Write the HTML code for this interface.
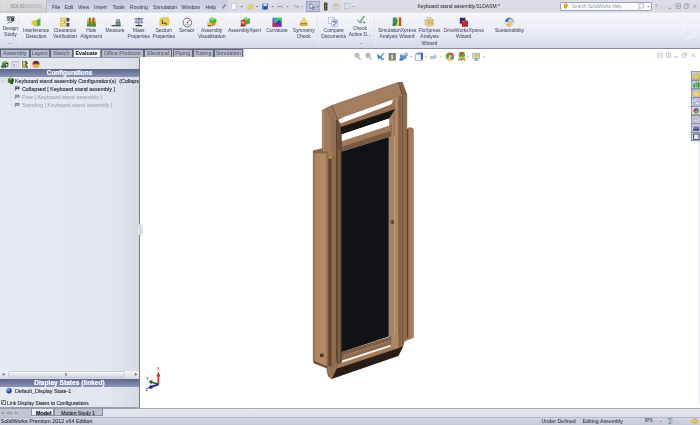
<!DOCTYPE html>
<html><head><meta charset="utf-8">
<style>
*{margin:0;padding:0;box-sizing:border-box}
html,body{width:700px;height:425px;overflow:hidden;background:#fff}
body{font-family:"Liberation Sans",sans-serif;position:relative;color:#222}
.abs{position:absolute}
#menubar{left:0;top:0;width:700px;height:12.6px;background:linear-gradient(#dedfe6,#d9dae2 85%,#e6e7ee)}
#menus{left:47px;top:0;width:181px;height:12.6px;background:linear-gradient(#c8ccdf,#d3d6e6 85%,#e0e2ee)}
#logo{left:0;top:0;width:47px;height:12.6px;background:linear-gradient(#dddee1,#cbccd1);border-right:1px solid #b9bbc6}
#ribbon{left:0;top:12.6px;width:700px;height:35.6px;background:linear-gradient(#f6f7fb 0%,#eff0f7 35%,#e4e6f0 70%,#d5d8e7 100%)}
#ribbonline{left:0;top:48.2px;width:700px;height:1px;background:#868ca3}
#tabrow{left:0;top:49px;width:243.5px;height:8px;background:#c3c7d4}
.t{position:absolute;white-space:nowrap;filter:blur(.3px);-webkit-text-stroke:.18px currentColor}
.m{font-size:5.2px;top:3.9px;color:#363a58;-webkit-text-stroke:.02px currentColor}
.rl{font-size:4.92px;line-height:6.3px;text-align:center;color:#4a4d6c;transform:translateX(-50%);-webkit-text-stroke:.04px currentColor}
.tab{position:absolute;top:49px;height:7.6px;border:0.6px solid #5e647c;border-left-width:.3px;border-right-width:.4px;border-bottom:none;background:#b9bdca;font-size:5.4px;line-height:6.4px;text-align:center;color:#50566c;overflow:hidden;white-space:nowrap}
.tab span{filter:blur(.3px);display:inline-block;-webkit-text-stroke:.03px currentColor}
#panel{left:0;top:57px;width:139px;height:352px;background:linear-gradient(90deg,#e7e9f1 0%,#e4e6ef 78%,#d7dae6 100%)}
#panelborder{left:138.9px;top:57px;width:.9px;height:352px;background:#747990}
.hdr{position:absolute;left:0;width:139px;height:8.5px;background:linear-gradient(#5c678f,#6f7aa0 45%,#8d97b9);color:#fff;font-weight:bold;font-size:6.4px;line-height:8.5px;text-align:center}
.tree{font-size:5.37px;color:#1a1a24;-webkit-text-stroke:.08px currentColor}
.gray{color:#a4a7b4}
#bottabs{left:0;top:408.4px;width:700px;height:8.4px;background:linear-gradient(#e6e8ef,#dcdfe8);border-top:.8px solid #a3a8ba}
#botnav{left:0;top:409px;width:31px;height:7.6px;background:#c3c7d3}
#status{left:0;top:416.6px;width:700px;height:8.4px;background:linear-gradient(#d3d6e1,#c6c9d6);border-top:.6px solid #b4b8c8}
</style></head><body>
<div class="abs" id="menubar"></div>
<div class="abs" id="menus"></div>
<div class="abs" id="logo"></div>
<div class="abs" id="ribbon"></div>
<div class="abs" id="ribbonline"></div>
<div class="abs" id="tabrow"></div>
<div class="abs" id="panel"></div>
<div class="abs" id="panelborder"></div>
<div class="abs" style="left:0;top:56.8px;width:140px;height:1.3px;background:#8f95ac"></div>
<div class="abs" id="bottabs"></div>
<div class="abs" id="botnav"></div>
<div class="abs" id="status"></div>

<!-- UI -->
<div class="t m" style="left:52px">File</div>
<div class="t m" style="left:64.5px">Edit</div>
<div class="t m" style="left:78px">View</div>
<div class="t m" style="left:94px">Insert</div>
<div class="t m" style="left:112.5px">Tools</div>
<div class="t m" style="left:130px">Routing</div>
<div class="t m" style="left:153px">Simulation</div>
<div class="t m" style="left:181.5px">Window</div>
<div class="t m" style="left:205.5px">Help</div>
<div class="t" style="left:10.5px;top:3.6px;font-size:4.5px;font-weight:bold;color:#a6a8af;letter-spacing:.05px;-webkit-text-stroke:0;top:4.2px"><span style="color:#9c9ea6">SOLID</span><span style="font-weight:normal">WORKS</span></div>
<div class="t" style="left:417.5px;top:2.9px;font-size:5px;color:#33343f;-webkit-text-stroke:.05px currentColor">Keyboard stand assembly.SLDASM *</div>
<div class="abs" style="left:560px;top:1.6px;width:91.5px;height:9.6px;background:#fbfbfe;border:.7px solid #9aa3bf;border-radius:1px"></div>
<div class="t" style="left:572px;top:3.9px;font-size:4.62px;color:#9496a4;-webkit-text-stroke:0">Search SolidWorks Help</div>
<div class="t rl" style="left:10.4px;top:25.5px">Design<br>Study</div>
<div class="t rl" style="left:36.2px;top:28.1px">Interference<br>Detection</div>
<div class="t rl" style="left:65px;top:28.1px">Clearance<br>Verification</div>
<div class="t rl" style="left:91.2px;top:28.1px">Hole<br>Alignment</div>
<div class="t rl" style="left:115px;top:28.1px">Measure</div>
<div class="t rl" style="left:138.7px;top:28.1px">Mass<br>Properties</div>
<div class="t rl" style="left:163.7px;top:28.1px">Section<br>Properties</div>
<div class="t rl" style="left:186.7px;top:28.1px">Sensor</div>
<div class="t rl" style="left:211.7px;top:28.1px">Assembly<br>Visualization</div>
<div class="t rl" style="left:244.5px;top:28.1px">AssemblyXpert</div>
<div class="t rl" style="left:277px;top:28.1px">Curvature</div>
<div class="t rl" style="left:303.7px;top:28.1px">Symmetry<br>Check</div>
<div class="t rl" style="left:333.7px;top:28.1px">Compare<br>Documents</div>
<div class="t rl" style="left:360px;top:25.5px">Check<br>Active D...</div>
<div class="t rl" style="left:397px;top:28.1px">SimulationXpress<br>Analysis Wizard</div>
<div class="t rl" style="left:429.5px;top:28.1px">FloXpress<br>Analysis<br>Wizard</div>
<div class="t rl" style="left:463.7px;top:28.1px">DriveWorksXpress<br>Wizard</div>
<div class="t rl" style="left:509.5px;top:28.1px">Sustainability</div>
<div class="tab" style="left:0px;width:29.5px"><span>Assembly</span></div>
<div class="tab" style="left:29.5px;width:20.5px"><span>Layout</span></div>
<div class="tab" style="left:50px;width:22.5px"><span>Sketch</span></div>
<div class="tab" style="left:72.5px;width:28.0px;background:#f4f5fa;color:#111;font-weight:bold;top:48.6px;height:8.6px;border-color:#8a90a4"><span>Evaluate</span></div>
<div class="tab" style="left:100.5px;width:43.19999999999999px"><span>Office Products</span></div>
<div class="tab" style="left:143.7px;width:28.80000000000001px"><span>Electrical</span></div>
<div class="tab" style="left:172.5px;width:20.5px"><span>Piping</span></div>
<div class="tab" style="left:193px;width:20.69999999999999px"><span>Tubing</span></div>
<div class="tab" style="left:213.7px;width:29.30000000000001px"><span>Simulation</span></div>
<div class="hdr" style="top:68.6px;height:8px;line-height:8px"><span class="t" style="position:static;display:inline-block">Configurations</span></div>
<div class="t tree" style="left:15px;top:77.6px;width:124px;overflow:hidden">Keyboard stand assembly Configuration(s)&nbsp; (Collapsed)</div>
<div class="t tree" style="left:22px;top:85.8px">Collapsed [ Keyboard stand assembly ]</div>
<div class="t tree gray" style="left:22px;top:94px">Free [ Keyboard stand assembly ]</div>
<div class="t tree gray" style="left:22px;top:102.2px">Standing [ Keyboard stand assembly ]</div>
<div class="abs" style="left:0;top:370.5px;width:139px;height:8px;background:linear-gradient(#f2f3f8,#d6d9e4)"></div>
<div class="abs" style="left:8px;top:371.3px;width:117px;height:6.4px;background:linear-gradient(#fbfbfd,#e0e2ea 60%,#d2d5e0);border:.4px solid #c9ccd8;border-radius:1px"></div><div class="abs" style="left:64.5px;top:373px;width:.5px;height:3px;background:#9a9eae"></div><div class="abs" style="left:66px;top:373px;width:.5px;height:3px;background:#9a9eae"></div>
<div class="t" style="left:2px;top:371.5px;font-size:3.2px;top:372.3px;color:#666">&#9664;</div><div class="t" style="left:134.5px;top:372.3px;font-size:3.2px;color:#666">&#9654;</div>
<div class="hdr" style="top:378.6px;font-size:6.62px"><span class="t" style="position:static;display:inline-block">Display States (linked)</span></div>
<div class="t tree" style="left:15px;top:388px">Default_Display State-1</div>
<div class="t tree" style="left:7px;top:399.5px;font-size:5px">Link Display States to Configurations</div>
<div class="abs" style="left:1px;top:400px;width:4.6px;height:4.6px;background:#fff;border:.5px solid #7d8296"></div><div class="t" style="left:1.4px;top:399px;font-size:5px;color:#333">&#10003;</div>
<div class="abs" style="left:0;top:407.4px;width:140px;height:1.3px;background:#979db2"></div>
<div class="abs" style="left:31px;top:409.3px;width:23px;height:7.2px;background:#eceef4;border:.5px solid #8a90a4;border-top:none"></div>
<div class="t" style="left:36px;top:410.3px;font-size:5.4px;font-weight:bold;color:#111">Model</div>
<div class="abs" style="left:54px;top:409.3px;width:49px;height:7.2px;background:#bfc3cf;border:.5px solid #8a90a4;border-top:none"></div>
<div class="t" style="left:61.3px;top:410.4px;font-size:5.05px;color:#333">Motion Study 1</div>
<div class="t" style="left:1px;top:410.6px;font-size:3.6px;color:#9a9eae;letter-spacing:1.6px">&#9664;&#9664;&#9654;&#9654;</div>
<div class="t" style="left:.6px;top:418.4px;font-size:5.4px;color:#24263a;-webkit-text-stroke:.05px currentColor">SolidWorks Premium 2012 x64 Edition</div>
<div class="t" style="left:541.5px;top:418.4px;font-size:5.3px;color:#2c2e44;-webkit-text-stroke:.03px currentColor">Under Defined</div>
<div class="t" style="left:582.5px;top:418.4px;font-size:5.3px;color:#2c2e44;-webkit-text-stroke:.03px currentColor">Editing Assembly</div>
<div class="t" style="left:645px;top:418.4px;font-size:4.8px;color:#2c2e44;-webkit-text-stroke:.03px currentColor">IPS</div>
<div class="t" style="left:660px;top:418px;font-size:5px;color:#444">-</div>
<svg class="abs" id="icons" style="left:0;top:0;filter:blur(.3px)" width="700" height="425" viewBox="0 0 700 425">
<rect x="1.6" y="3" width="6.8" height="7.4" rx="1.6" fill="#d9d4d0" stroke="#efe2d4" stroke-width=".7"/><path d="M3 5 l2.4 -.6 l-1.2 1.8 q1.6 0 1 1.4 q-.6 1 -2 1.2" fill="none" stroke="#f4efe8" stroke-width=".6"/>

<path d="M222 8 l3 -4 l1 1 l-3 4z" fill="#7d8190"/>
<path d="M231.4 3.4 h3.2 l1.4 1.4 v4.6 h-4.6z" fill="#fdfdfe" stroke="#9ba0b3" stroke-width=".45"/>
<polygon points="240.5,5.95 242.7,5.95 241.6,7.25" fill="#555"/>
<path d="M247.4 9 l1 -3.6 h5 l-1.2 3.6z" fill="#ead768" stroke="#b4a248" stroke-width=".35"/><path d="M249.4 5.2 l1.4 -2 l1.6 2z" fill="#dcc956"/>
<polygon points="255.9,5.95 258.1,5.95 257,7.25" fill="#555"/>
<rect x="262.2" y="3.4" width="5.8" height="6" rx=".5" fill="#3a72c0"/><rect x="263.4" y="3.6" width="3.4" height="2.2" fill="#e4ecf8"/><rect x="263.8" y="7" width="2.6" height="2.4" fill="#244a88"/>
<polygon points="271.29999999999995,5.95 273.5,5.95 272.4,7.25" fill="#555"/>
<rect x="277.2" y="5.4" width="5.8" height="3" rx=".6" fill="#b0b4c0"/><rect x="278.4" y="3.8" width="3.4" height="1.8" fill="#f4f4f7" stroke="#a0a4b4" stroke-width=".3"/><rect x="278.4" y="7.4" width="3.4" height="1.8" fill="#e6e7ec"/>
<polygon points="286.5,5.95 288.70000000000005,5.95 287.6,7.25" fill="#777"/>
<path d="M293.5 7.2 q1.5 -3.6 4.6 -1.2 l.6 -.9 l.4 3 l-3 -.3 l.9 -.8 q-1.7 -1.4 -2.6 .6z" fill="#a9b0c8"/>
<polygon points="300.7,5.95 302.90000000000003,5.95 301.8,7.25" fill="#999"/>
<rect x="306.4" y="1.2" width="12.8" height="10.4" fill="#bcc3dc" stroke="#7382b4" stroke-width=".6"/>
<path d="M310 3.2 v5.6 l1.4 -1.3 l.9 1.9 l.9 -.5 l-.9 -1.8 h1.9z" fill="#eef0f8" stroke="#3e4664" stroke-width=".5"/><rect x="312.8" y="7.6" width="2.2" height="2" fill="none" stroke="#5a6288" stroke-width=".35"/>
<polygon points="316.5,6.05 318.29999999999995,6.05 317.4,7.15" fill="#444"/>
<rect x="324" y="2.4" width="3.4" height="8" rx="1" fill="#3a3530"/><circle cx="325.7" cy="4" r=".9" fill="#c8452e"/><circle cx="325.7" cy="6.3" r=".9" fill="#d2a83a"/><circle cx="325.7" cy="8.6" r=".9" fill="#5c9a48"/>
<rect x="333.8" y="4.6" width="5.4" height="3.8" fill="#dcd9c6" stroke="#a9a693" stroke-width=".35"/><rect x="334.4" y="3.6" width="3.4" height="1.2" fill="#c9bb7c"/><line x1="334.6" y1="6.4" x2="338.4" y2="6.4" stroke="#a9a693" stroke-width=".4"/>
<rect x="344.2" y="3.8" width="5.8" height="5" fill="#cbd4e6" stroke="#98a6c4" stroke-width=".35"/><line x1="344.6" y1="5.2" x2="349.6" y2="5.2" stroke="#fff" stroke-width=".6"/><line x1="344.6" y1="7" x2="349.6" y2="7" stroke="#fff" stroke-width=".6"/>
<polygon points="352.70000000000005,6.05 354.5,6.05 353.6,7.15" fill="#777"/>
<path d="M563.5 4 l3 -1 l1.6 2.2 l-2 3.8 l-2 -1z" fill="#d9a92e"/><path d="M564 4.4 l2 -.4 l.6 1.6z" fill="#f3dc84"/>
<circle cx="641.2" cy="5.6" r="2.6" fill="none" stroke="#8d93a6" stroke-width=".6"/><line x1="639.6" y1="7.8" x2="637.6" y2="10.4" stroke="#8d93a6" stroke-width=".8"/>
<polygon points="647.4,6.1499999999999995 649.1999999999999,6.1499999999999995 648.3,7.25" fill="#333"/>
<text x="654.8" y="8.2" font-size="5.2" fill="#8d92a6" font-family="Liberation Sans">?</text>
<polygon points="660.8,6 662.4,6 661.6,7" fill="#777"/>
<rect x="668.4" y="7.8" width="3" height=".9" fill="#8a8fa2"/>
<rect x="676.2" y="3.8" width="4.4" height="4.6" fill="none" stroke="#8a8fa2" stroke-width=".6"/><rect x="677.4" y="5" width="2" height="2.2" fill="#a4a9ba"/>
<rect x="684.4" y="4.8" width="3.4" height="3.4" fill="none" stroke="#8a8fa2" stroke-width=".6"/><path d="M685.6 4.6 v-1 h3.4 v3.4 h-1" fill="none" stroke="#8a8fa2" stroke-width=".6"/>
<path d="M693.2 4.4 l3.2 3.6 M696.4 4.4 l-3.2 3.6" stroke="#9499ac" stroke-width=".7"/>
<g transform="translate(6.6,16.4)"><rect x="0" y="0" width="8" height="1.4" fill="#5a5d68"/><rect x=".4" y="1.6" width="3.2" height="3" fill="#8a8e9a"/><rect x="4.2" y="1.6" width="3.4" height="3" fill="#44474f"/><path d="M1 7.2 l2 -2 l1.6 1 l2.6 -2" stroke="#3c3f48" stroke-width=".8" fill="none"/></g>
<polygon points="8.9,42.949999999999996 10.700000000000001,42.949999999999996 9.8,44.050000000000004" fill="#666"/>
<line x1="19.3" y1="15" x2="19.3" y2="46" stroke="#f6f7fb" stroke-width=".7"/><line x1="18.7" y1="15" x2="18.7" y2="46" stroke="#d0d3e0" stroke-width=".5"/>
<g transform="translate(31.6,17.6)"><path d="M0 3.6 l3.6 -1.6 v6 l-3.6 -.8z" fill="#e8cf3c"/><path d="M3.2 3.4 l5.6 -3 v7.4 l-5.6 1.2z" fill="#4fae3e"/><path d="M3.2 3.4 l2.2 -1.2 v6 l-2.2 .5z" fill="#c7d04a"/><path d="M5.6 1.6 l3.2 -1.2 v2z" fill="#8fd97c"/></g>
<g transform="translate(60.2,17.6)"><rect x="0" y=".4" width="9" height="3.4" fill="#e6d24a" stroke="#a89a30" stroke-width=".3"/><rect x="0" y="5.4" width="9" height="3.4" fill="#e6d24a" stroke="#a89a30" stroke-width=".3"/><rect x="6.4" y=".4" width="2.6" height="3.4" fill="#3a4a86"/><rect x="6.4" y="5.4" width="2.6" height="3.4" fill="#3a4a86"/><rect x="1.4" y="1.2" width="3.6" height="1" fill="#f6eea0"/><rect x="1.4" y="6.2" width="3.6" height="1" fill="#f6eea0"/><line x1="4.4" y1="3.8" x2="4.4" y2="5.4" stroke="#444" stroke-width=".6"/></g>
<g transform="translate(87,17.6)"><rect x="0" y="1.2" width="9" height="7.6" rx=".6" fill="#7eb83a"/><rect x="0" y="1.2" width="9" height="3" fill="#d9c93e"/><rect x="2" y="0" width="1.6" height="8" fill="#8a5a2a"/><rect x="5.6" y="0" width="1.6" height="8" fill="#c0392b"/><rect x="0" y="6.6" width="9" height="2.2" fill="#4b8d2c"/></g>
<g transform="translate(111.6,19.4)"><path d="M0 5.6 h4 v-3.4 h5 v4.6 h-9z" fill="#6f8f86"/><rect x="4.6" y="0" width="3.8" height="3.4" fill="#4c7a74"/><rect x="5.4" y=".8" width="2.2" height="1.4" fill="#bcd6cf"/><rect x="0" y="5.8" width="9" height="1" fill="#3e4c4a"/></g>
<g transform="translate(134.6,18)"><rect x="0" y=".2" width="8.6" height="1.2" fill="#5b6590"/><rect x="3.8" y="0" width="1" height="7" fill="#4a4f68"/><path d="M0 4.6 h3.4 l-1.7 -3z" fill="#8fa2cc" stroke="#5b6590" stroke-width=".3"/><path d="M5.2 4.6 h3.4 l-1.7 -3z" fill="#8fa2cc" stroke="#5b6590" stroke-width=".3"/><path d="M0 4.6 q1.7 1.8 3.4 0z M5.2 4.6 q1.7 1.8 3.4 0z" fill="#6b7cae"/><rect x="1" y="7" width="6.6" height="1.3" fill="#33364a"/></g>
<g transform="translate(159.8,17.6)"><path d="M0 1 l3 -1 h5.6 l.8 1.4 v5.4 l-3 1.4 h-6.4z" fill="#e7d24c" stroke="#b5a236" stroke-width=".3"/><path d="M2.6 2.2 v3.4 h3.6 v1.8" stroke="#5c4a1c" stroke-width="1.1" fill="none"/></g>
<circle cx="187.4" cy="22.6" r="4.3" fill="#f6f6f8" stroke="#6a6470" stroke-width=".9"/><path d="M187.4 22.8 l2.6 -2.6" stroke="#c0322a" stroke-width=".9"/><path d="M184 24.8 h6.8" stroke="#8a8792" stroke-width=".6"/><circle cx="187.4" cy="22.8" r=".7" fill="#444"/>
<g transform="translate(207.2,17.2)"><path d="M4.6 0 l4.6 1.8 v3.4 l-4.6 2 l-2.4 -1.2 v-4.2z" fill="#49b23a"/><path d="M4.6 0 l4.6 1.8 l-4.4 1.6 l-2.6 -1.6z" fill="#8be070"/><path d="M0 4 l4.6 2 v3.4 l-4.6 -1.6z" fill="#e9c840"/><path d="M4.6 6 l3.6 -1.4 v3.2 l-3.6 1.6z" fill="#d98a2c"/><rect x=".4" y="7.8" width="3.6" height="1.4" fill="#59606e"/></g>
<g transform="translate(240.8,17.2)"><path d="M4.4 0 l4.8 1.6 v4.4 l-4.6 1.8 l-2 -1 v-4.8z" fill="#46ad38"/><path d="M4.4 0 l4.8 1.6 l-4.4 1.6 l-2.2 -1.4z" fill="#88dc6e"/><path d="M0 3 l4.4 -.6 v6 l-4.4 .8z" fill="#d5382c"/><path d="M.6 5.4 h3.2 M2.2 3.8 v3.4" stroke="#f7d8d0" stroke-width=".7"/><rect x="0" y="7.8" width="4.6" height="1.4" fill="#8c2a22"/></g>
<defs><linearGradient id="cv1" x1="0" y1="0" x2="1" y2="1"><stop offset="0" stop-color="#2a3fd8"/><stop offset=".28" stop-color="#25b8d8"/><stop offset=".45" stop-color="#38d44a"/><stop offset=".5" stop-color="#2b2f9c"/><stop offset=".7" stop-color="#7a2cc0"/><stop offset="1" stop-color="#2030b0"/></linearGradient><linearGradient id="cv2" x1="0" y1="0" x2="0" y2="1"><stop offset=".4" stop-color="#d01878" stop-opacity="0"/><stop offset="1" stop-color="#e0203a"/></linearGradient></defs>
<rect x="272.6" y="17.8" width="9" height="9" fill="url(#cv1)"/><path d="M272.6 20 v6.8 h6z" fill="#d8226a"/><path d="M272.6 23.6 v3.2 h3z" fill="#e03030"/><path d="M277 17.8 h4.6 v4.4z" fill="#3ad24e"/>
<g transform="translate(299.2,17.4)"><path d="M4.5 0 l4.2 7 h-8.4z" fill="#ecd14a" stroke="#b89c2c" stroke-width=".4"/><path d="M4.5 1.6 l1.2 2.2 h-2.4z" fill="#f8efb0"/><rect x="1.2" y="6" width="6.6" height="1.4" fill="#6a5520"/><ellipse cx="4.5" cy="7.6" rx="4.3" ry="1" fill="#d9b83a"/></g>
<line x1="318.3" y1="15" x2="318.3" y2="46" stroke="#f6f7fb" stroke-width=".7"/><line x1="317.7" y1="15" x2="317.7" y2="46" stroke="#cfd2df" stroke-width=".5"/>
<g transform="translate(328.8,17.2)"><rect x="0" y="0" width="5.4" height="6.6" fill="#f4f6fb" stroke="#8a93ad" stroke-width=".45"/><rect x="3" y="2.6" width="5.8" height="6.8" fill="#eef2fa" stroke="#7f8aa8" stroke-width=".45"/><rect x="3.8" y="3.4" width="4.2" height="2" fill="#6c8fd0"/><path d="M4.2 6.8 l1.2 1.4 l2.4 -3" stroke="#2c55b0" stroke-width=".8" fill="none"/></g>
<g transform="translate(357,15.2)"><path d="M.6 4.6 l2 2.4 l5 -6.2" stroke="#5aae48" stroke-width="1.2" fill="none"/><path d="M1 6.6 l2.6 -1.4 l2.8 1.6 l-2.6 1.6z" fill="#a6abb8"/><circle cx="7.2" cy="7.4" r="1" fill="#6a7a58"/></g>
<polygon points="360.40000000000003,42.949999999999996 362.2,42.949999999999996 361.3,44.050000000000004" fill="#666"/>
<line x1="375" y1="15" x2="375" y2="46" stroke="#f6f7fb" stroke-width=".7"/><line x1="374.4" y1="15" x2="374.4" y2="46" stroke="#cfd2df" stroke-width=".5"/>
<g transform="translate(392.8,17.4)"><path d="M0 0 h3.2 l2.2 3 l-2.2 5.6 h-3.2 z" fill="#2f8a8a"/><path d="M0 5 l3.4 -2.2 l1.6 1 l-3 4.8 h-2z" fill="#3b9a4a"/><path d="M3.2 0 h3 v8.6 h-3 l2 -4.6z" fill="#e8d040"/><path d="M6.2 0 h2.2 v8.6 h-2.2z" fill="#d0482c"/><path d="M5 3 l1.4 1.6 l-1.4 1.6z" fill="#f0f0c0"/><path d="M0 8.2 l2 -2" stroke="#1c4c6c" stroke-width="1"/></g>
<g transform="translate(424.6,17.6)"><rect x="0" y="1.4" width="3" height="6.4" fill="#e2c48e"/><rect x="3" y="0" width="3.4" height="9" fill="#f0d8a8" stroke="#c89a54" stroke-width=".4"/><rect x="6.4" y="1.4" width="2.6" height="6.4" fill="#dcae6c"/><rect x="3.8" y="2" width="1.6" height="5" fill="#e89a3c"/></g>
<rect x="459.8" y="17.8" width="5.6" height="5.8" fill="#26306e"/><rect x="462" y="20.4" width="6" height="6.4" rx=".4" fill="#c4242e"/><rect x="462.6" y="21" width="2" height="1.4" fill="#e06a6a"/>
<circle cx="509.4" cy="22" r="4.5" fill="#e9eef8" stroke="#a6b4d4" stroke-width=".5"/><path d="M505.2 22 a4.2 4.2 0 0 1 6.4 -3.6 q-3.4 .4 -3.8 3.6z" fill="#3c6cc8"/><circle cx="510" cy="23" r="2.5" fill="#f0cf4e"/><path d="M506.2 24.6 q2 3 5.6 1 q-3 .4 -4.2 -2.2z" fill="#d8a838"/><path d="M511.6 18.6 q2.6 1.6 2 4.6 q-1 -3 -3.4 -3.6z" fill="#7ea0e0"/>
<g fill="none" stroke="#f7f8fc" stroke-width="1.1" stroke-linejoin="round"><path d="M679 17 l10 -2.4 l-5.6 7.4 q5 -.6 2.6 5 q-2.6 6 -9.6 8.6"/><path d="M698 19.6 q-6.6 -.6 -7.4 4.6 q-.4 3.4 3 5 q3.6 2 .4 6.4 q-2 2.4 -6.4 2.8"/></g><g fill="none" stroke="#d5d8e6" stroke-width=".35"><path d="M679.6 17.6 l10 -2.4 l-5.6 7.4 q5 -.6 2.6 5 q-2.6 6 -9.6 8.6"/><path d="M698.6 20.2 q-6.6 -.6 -7.4 4.6 q-.4 3.4 3 5 q3.6 2 .4 6.4 q-2 2.4 -6.4 2.8"/></g>
<rect x="20.4" y="60.2" width="9.6" height="8" fill="#fbfbfd" stroke="#c9cce0" stroke-width=".4"/>
<rect x="31.4" y="60.2" width="9.2" height="8" fill="#ecd9e4" opacity=".7"/>
<g transform="translate(1.2,60.6)"><path d="M1 2 l3 -1.6 l3 1.4 v3.6 l-3 1.8 l-3 -1.6z" fill="#3f7d30"/><path d="M1 2 l3 -1.6 l3 1.4 l-3 1.4z" fill="#86bd68"/><path d="M4 3.2 v4 l3 -1.8 v-3.6z" fill="#1f3f1c"/><path d="M0 5 l2.4 1.4 v1.4 l-2.4 -1.2z" fill="#2a3a24"/><circle cx="5.4" cy="4.4" r="1" fill="#e8efe0"/></g>
<g transform="translate(11.4,60.6)"><rect x=".4" y=".6" width="6.4" height="6.4" fill="#f2f3f7" stroke="#a9adbd" stroke-width=".5"/><rect x=".4" y=".6" width="6.4" height="1.6" fill="#c5c9d8"/><rect x="1.4" y="3.2" width="2.4" height="2.6" fill="#b5b9c8"/><line x1="4.4" y1="3.6" x2="6" y2="3.6" stroke="#9a9eae" stroke-width=".5"/><line x1="4.4" y1="5" x2="6" y2="5" stroke="#9a9eae" stroke-width=".5"/></g>
<g transform="translate(21.8,60.6)"><rect x=".6" y="1" width="3.4" height="5.6" fill="#b9b254" stroke="#5c5a2c" stroke-width=".5"/><path d="M3.6 0.4 l2 1 v2 l-1.4 .8 l1.6 1.4 v1.6 l-1.6 -.6" fill="#6f7a32" stroke="#3d4220" stroke-width=".5"/><circle cx="2.4" cy="2.6" r=".8" fill="#f1eeb0"/></g>
<circle cx="36" cy="64.2" r="3.3" fill="#e8c438"/><path d="M32.7 64.2 a3.3 3.3 0 0 1 6.6 0z" fill="#5a2440"/><circle cx="36" cy="64.2" r="3.3" fill="none" stroke="#8a5a3a" stroke-width=".4"/><path d="M33.4 63.8 h5.2" stroke="#d8486a" stroke-width=".7"/>
<rect x="1.6" y="78.6" width="3.6" height="3.6" fill="#fafbfd" stroke="#a9adc0" stroke-width=".45"/><line x1="2.4" y1="80.4" x2="4.4" y2="80.4" stroke="#667" stroke-width=".5"/>
<g transform="translate(7.4,77.4)"><path d="M.4 1.4 l2.8 -1.2 l3 1 v3.2 l-2.6 2.2 l-3.2 -1.8z" fill="#3f7a2c"/><path d="M.4 1.4 l2.8 -1.2 l3 1 l-2.8 1.2z" fill="#8dbd66"/><path d="M3.4 2.4 v4.2 l2.8 -2.2 v-3.2z" fill="#2c4a22"/><circle cx="4.6" cy="5.6" r="1.2" fill="#38502c"/></g>
<path d="M10.6 84.6 V104.8 M10.6 88.8 H15 M10.6 97 H15 M10.6 104.8 H15" stroke="#b4b8c8" stroke-width=".5" stroke-dasharray=".7 .7" fill="none"/>
<g transform="translate(15,86.39999999999999)"><line x1=".4" y1="0" x2=".4" y2="4.2" stroke="#2c2c34" stroke-width=".7"/><path d="M.8 .2 h3.6 v2.6 h-3.6z" fill="#2c2c34"/><rect x="1.6" y=".9" width="1.6" height="1.1" fill="#e8e9f0"/></g>
<g transform="translate(15,94.6)"><line x1=".4" y1="0" x2=".4" y2="4.2" stroke="#6a6d7a" stroke-width=".7"/><path d="M.8 .2 h3.6 v2.6 h-3.6z" fill="#6a6d7a"/><rect x="1.6" y=".9" width="1.6" height="1.1" fill="#e8e9f0"/></g>
<g transform="translate(15,102.8)"><line x1=".4" y1="0" x2=".4" y2="4.2" stroke="#6a6d7a" stroke-width=".7"/><path d="M.8 .2 h3.6 v2.6 h-3.6z" fill="#6a6d7a"/><rect x="1.6" y=".9" width="1.6" height="1.1" fill="#e8e9f0"/></g>
<defs><radialGradient id="sph" cx=".35" cy=".3" r=".8"><stop offset="0" stop-color="#9cc0ff"/><stop offset=".45" stop-color="#2c5ad8"/><stop offset="1" stop-color="#0c1e78"/></radialGradient></defs>
<circle cx="9" cy="390.8" r="2.7" fill="url(#sph)"/>
<circle cx="357.0" cy="55.400000000000006" r="2.1" fill="#d9dae1" stroke="#9496a4" stroke-width=".9"/><line x1="358.6" y1="57.400000000000006" x2="360.6" y2="59.6" stroke="#9a9eac" stroke-width="1.1"/>
<circle cx="368.0" cy="55.400000000000006" r="2.1" fill="#d9dae1" stroke="#9496a4" stroke-width=".9"/><line x1="369.6" y1="57.400000000000006" x2="371.6" y2="59.6" stroke="#9a9eac" stroke-width="1.1"/>
<line x1="356" y1="55.4" x2="358" y2="55.4" stroke="#8c90a0" stroke-width=".5"/><line x1="367" y1="55.4" x2="369" y2="55.4" stroke="#8c90a0" stroke-width=".5"/><line x1="368" y1="54.4" x2="368" y2="56.4" stroke="#8c90a0" stroke-width=".5"/>
<path d="M377.4 53.4 l3 3 l3 -3.4 l.8 .8 l-3 3.4 l2 2.4 l-1.4 .6 l-2 -2.2 l-1.6 1.6 l-.6 -2.6z" fill="#3f7fca"/><circle cx="382.6" cy="59" r="1.2" fill="#6aa0dc"/>
<rect x="389" y="53.2" width="6.6" height="7" fill="#74846a" stroke="#586650" stroke-width=".4"/><rect x="390.8" y="54.6" width="2.6" height="5" fill="#bcc8a6"/>
<path d="M400 54.6 l3 -1.6 l3.6 1.2 v4 l-3.4 1.8 l-3.2 -1.4z" fill="#5f92d6"/><path d="M400 54.6 l3 -1.6 l3.6 1.2 l-3.4 1.4z" fill="#dde6f4"/><path d="M399.4 58.6 h3.4 v2 h-3.4z" fill="#586a90"/><path d="M405 52.6 l2.2 1 v2.4" stroke="#4c6aa8" stroke-width=".7" fill="none"/>
<polygon points="410.2,56.6 411.8,56.6 411,57.6" fill="#555"/>
<path d="M415.6 54.2 l2 -1.6 h5.4 v6.2 l-2 1.8 h-5.4z" fill="#5a8ed4"/><rect x="415.6" y="54.2" width="5.4" height="6.4" fill="#f4f7fc" stroke="#5a82c0" stroke-width=".4"/><path d="M421 54.2 l2 -1.6 v6.2 l-2 1.8z" fill="#3c6ab4"/>
<polygon points="425.2,56.6 426.8,56.6 426,57.6" fill="#555"/>
<path d="M430 57.4 q1.4 -2.6 3 -.6 q1.2 -2.6 3.4 -1 l-1 2.8 q-1.6 -.8 -2.2 .4 q-1.2 -1.6 -2.4 0z" fill="#b4c2de" stroke="#8c9cc0" stroke-width=".4"/><line x1="433.4" y1="53.2" x2="436" y2="55" stroke="#9aa8c8" stroke-width=".5"/>
<polygon points="440.2,56.6 441.8,56.6 441,57.6" fill="#666"/>
<circle cx="450" cy="56.6" r="4" fill="#e2483a"/><path d="M450 56.6 l-1 -3.9 a4 4 0 0 0 -2.6 6.4z" fill="#4caf50"/><path d="M450 56.6 l-3.6 2.5 a4 4 0 0 0 5.6 1z" fill="#f0d048"/><path d="M450 56.6 l2 3.5 a4 4 0 0 0 2 -3.2z" fill="#4c8ce0"/><circle cx="450.4" cy="56.2" r="1.3" fill="#f4e8d8" opacity=".75"/>
<circle cx="461.8" cy="55" r="3.2" fill="#4fa848"/><path d="M459.4 53.4 a3.2 3.2 0 0 1 5 .2 l-2.4 1.6z" fill="#e0483a"/><path d="M458 58 l3.8 -1.6 l3.8 1.6 l-1 3 l-2.8 -1.4 l-2.8 1.4z" fill="#e8c438"/><path d="M460.2 58.6 l1.6 2.4 l1.6 -2.4z" fill="#3c6cc0"/><path d="M458 60.4 l1.6 -1 M465.6 60.4 l-1.6 -1" stroke="#2c7a3c" stroke-width=".7"/>
<polygon points="467.2,56.6 468.8,56.6 468,57.6" fill="#555"/>
<rect x="472.8" y="53.2" width="7" height="5.4" fill="#d9dbe4" stroke="#7c8090" stroke-width=".5"/><rect x="473.8" y="54.2" width="5" height="3.4" fill="#e8d470"/><rect x="475" y="58.8" width="2.6" height="1" fill="#7c8090"/><rect x="474" y="59.8" width="4.6" height=".8" fill="#8c90a0"/><path d="M474.6 56.8 l1.4 -1.4 l1 1 l1.4 -1.6" stroke="#5c7aa8" stroke-width=".5" fill="none"/>
<polygon points="483.0,56.6 484.6,56.6 483.8,57.6" fill="#555"/>
<rect x="657.8" y="53" width="4.6" height="4.2" fill="none" stroke="#b4b8c6" stroke-width=".7"/><line x1="657.8" y1="55.1" x2="662.4" y2="55.1" stroke="#b4b8c6" stroke-width=".6"/>
<rect x="666.2" y="53" width="4.6" height="4.2" fill="none" stroke="#b4b8c6" stroke-width=".7"/><line x1="668.5" y1="53" x2="668.5" y2="57.2" stroke="#b4b8c6" stroke-width=".6"/>
<rect x="674.4" y="56.4" width="3.8" height="1" fill="#b4b8c6"/>
<rect x="682" y="54.4" width="3.4" height="3" fill="none" stroke="#b4b8c6" stroke-width=".7"/><path d="M683.4 54 v-1.2 h3.4 v3 h-1" fill="none" stroke="#b4b8c6" stroke-width=".7"/>
<path d="M691.6 53.2 l3.6 4 M695.2 53.2 l-3.6 4" stroke="#b4b8c6" stroke-width=".8"/>
<rect x="691" y="71.4" width="9.4" height="69.6" fill="#b9bdd2"/>
<rect x="691.6" y="71.7" width="8.6" height="8.3" fill="#c8ccde" stroke="#6a7290" stroke-width=".55"/>
<rect x="691.6" y="80.4" width="8.6" height="8.3" fill="#c8ccde" stroke="#6a7290" stroke-width=".55"/>
<rect x="691.6" y="89.10000000000001" width="8.6" height="8.3" fill="#c8ccde" stroke="#6a7290" stroke-width=".55"/>
<rect x="691.6" y="97.80000000000001" width="8.6" height="8.3" fill="#c8ccde" stroke="#6a7290" stroke-width=".55"/>
<rect x="691.6" y="106.5" width="8.6" height="8.3" fill="#c8ccde" stroke="#6a7290" stroke-width=".55"/>
<rect x="691.6" y="115.2" width="8.6" height="8.3" fill="#c8ccde" stroke="#6a7290" stroke-width=".55"/>
<rect x="691.6" y="123.9" width="8.6" height="8.3" fill="#c8ccde" stroke="#6a7290" stroke-width=".55"/>
<rect x="691.6" y="132.6" width="8.6" height="8.3" fill="#c8ccde" stroke="#6a7290" stroke-width=".55"/>
<path d="M693.4 76.2 l3 -3 l3 3 v2.6 h-6z" fill="#e6d05a" stroke="#8c7c30" stroke-width=".4"/>
<rect x="693.4" y="83.5" width="1.8" height="4" fill="#3c9a3c"/><rect x="695.6" y="81.5" width="1.8" height="6" fill="#58b848"/><rect x="697.8" y="82.7" width="1.6" height="4.8" fill="#2c7a2c"/>
<path d="M693 90.8 h2.6 l.8 1 h3.4 v4.4 h-6.8z" fill="#f0d868" stroke="#a8923c" stroke-width=".4"/>
<rect x="693.4" y="99.10000000000001" width="5.6" height="5.6" fill="#dfe4f0" stroke="#8a94b4" stroke-width=".4"/><path d="M694 103.9 l2.4 -3 l2 1.4" stroke="#3c6cc0" stroke-width=".8" fill="none"/>
<rect x="692.6" y="107.19999999999999" width="7" height="6.8" fill="#f4f5fa"/><circle cx="696.2" cy="110.6" r="2.9" fill="#e0483c"/><path d="M696.2 110.6 v-2.9 a2.9 2.9 0 0 1 2.8 3.6z" fill="#4c8ce0"/><path d="M696.2 110.6 l2.8 .7 a2.9 2.9 0 0 1 -4.8 1.6z" fill="#58b848"/>
<rect x="693.2" y="116.7" width="6" height="5" fill="#d4d7e4" stroke="#8a8ea4" stroke-width=".4"/><path d="M694 119.89999999999999 l1.4 -1.6 l1.2 1 l1.6 -1.6" stroke="#7a5a4a" stroke-width=".6" fill="none"/>
<path d="M693.2 130.4 v-3 l1.6 -1.6 l1.4 1.4 l1.4 -1.4 l1.6 1.6 v3z" fill="#6a7aa8"/><rect x="693.2" y="129" width="6" height="1.6" fill="#3c4a78"/>
<rect x="693.6" y="134.1" width="5.4" height="5.4" fill="#e4e7f2" stroke="#3a4060" stroke-width=".9"/>
<line x1="699.2" y1="141" x2="699.2" y2="404" stroke="#d8dbe8" stroke-width=".8"/>
<line x1="158.4" y1="384.6" x2="158.4" y2="375" stroke="#c23434" stroke-width="1.7"/><polygon points="156.4,376.4 160.4,376.4 158.4,371.6" fill="#c23434"/>
<line x1="158.4" y1="384" x2="151.4" y2="382.2" stroke="#1f6a24" stroke-width="1.7"/><polygon points="152.6,380 151.6,384.2 148.4,381.2" fill="#1c6420"/>
<line x1="158.4" y1="384.4" x2="151" y2="387" stroke="#2222a0" stroke-width="1.9"/><polygon points="151,384.8 152.6,388.8 147.6,388.2" fill="#1e1e98"/>
<text x="157" y="370.2" font-size="3.8" font-weight="bold" fill="#d86060" font-family="Liberation Sans">X</text><text x="146" y="380.2" font-size="4" font-weight="bold" fill="#2c6a30" font-family="Liberation Sans">Y</text><text x="145.4" y="390.8" font-size="4" font-weight="bold" fill="#2c2ca0" font-family="Liberation Sans">Z</text>
<path d="M667.6 418.6 h4.4 M669.8 418.6 v5 M668.4 423.6 h2.8" stroke="#4c8a7c" stroke-width=".7" fill="none"/><path d="M672 419 v4" stroke="#6c9a8c" stroke-width=".6"/>
<circle cx="694.4" cy="421" r="2.3" fill="#e8c438" stroke="#a8882c" stroke-width=".4"/><circle cx="693.8" cy="420.4" r=".8" fill="#f8ecb0"/>
<rect x="137.4" y="224.4" width="5" height="10.4" rx=".6" fill="#e9eaef" stroke="#c4c7d2" stroke-width=".4"/><path d="M139 226.4 h2.4 M139 228.4 h2.4 M139 230.4 h2.4 M139 232.4 h2.4" stroke="#a9adbb" stroke-width=".6"/>
<!-- ICONS3 -->
</svg>
<!-- MODEL -->
<svg class="abs" id="model" style="left:0;top:0" width="700" height="425" viewBox="0 0 700 425">
<defs>
<linearGradient id="lp" x1="0" x2="1" y1="0" y2="0"><stop offset="0" stop-color="#906a4c"/><stop offset=".12" stop-color="#ad8461"/><stop offset=".45" stop-color="#b58a66"/><stop offset=".8" stop-color="#ac825f"/><stop offset="1" stop-color="#9a7050"/></linearGradient>
<filter id="bl" color-interpolation-filters="sRGB"><feGaussianBlur stdDeviation="0.42"/></filter>
</defs>
<g filter="url(#bl)" stroke-linejoin="round">
<!-- right side panel -->
<path d="M407.2 130 Q407.2 127.6 410.3 127.6 Q413.5 127.6 413.5 130.6 L413.5 337.6 L409 339.5 L404.8 341 L404.8 334.4 L402.9 334.4 L402.9 130Z" fill="#a47c5b" stroke="#5e4433" stroke-width=".35"/>
<rect x="406.9" y="129" width="1.4" height="209" fill="#5f4432"/>
<rect x="408.3" y="129" width="1.2" height="210" fill="#96704f"/>
<!-- right post side face -->
<polygon points="402.2,81.9 406.9,94.5 406.9,334 402.9,346.2 398.2,356.1 398.2,94.5" fill="#8f6b4e" stroke="#5a4130" stroke-width=".35"/>
<polygon points="398.3,82.3 402.2,81.9 406.9,94.5 402,94.5" fill="#83604a"/>
<rect x="401.5" y="94.5" width="1.1" height="250" fill="#5e4432"/>
<!-- left side panel -->
<polygon points="313.2,150.8 322.5,148.6 329.2,148.6 332.4,152 332.4,366.2 329,369 313.9,363 313.2,361" fill="url(#lp)" stroke="#5e4433" stroke-width=".4"/>
<polygon points="313.2,150.8 322.5,148.6 329.2,148.6 331,153.2 313.4,153.6" fill="#8a6448"/>
<rect x="329" y="156" width="3.4" height="211" fill="#6c4e3a"/>
<polygon points="313.9,361 329,367 329,369 313.9,363" fill="#6e4d38"/>
<circle cx="321.8" cy="355.3" r="1.9" fill="#3c2418"/><circle cx="322" cy="355.5" r=".8" fill="#8a6a50"/>
<!-- left post -->
<polygon points="322.3,110.2 331.5,105.5 337.2,118.5 341.6,118 341.6,362 337,368.2 331.7,378.7 328.4,376.1 327.1,370.2 327.1,152 322.3,152" fill="#a27a5b" stroke="#5a4130" stroke-width=".4"/>
<rect x="322.5" y="111" width="1.6" height="40" fill="#b08a6a"/>
<polygon points="331.6,108 337.2,118.5 337.2,366 332.4,366 332.4,152 331.6,152" fill="#967052"/>
<rect x="331.4" y="156" width="4.9" height="210" fill="#916a4b"/>
<rect x="328.3" y="159" width="3.1" height="207.4" fill="#5f4432"/>

<rect x="336.3" y="119" width="5.3" height="245" fill="#6d4f3b"/>
<rect x="336.1" y="119" width=".7" height="245" fill="#553c2c"/>
<rect x="338.6" y="150" width="1.2" height="212" fill="#8e694d"/>
<rect x="340.8" y="119" width=".9" height="243" fill="#4e3728"/>
<circle cx="330.4" cy="156.9" r="2.1" fill="#ad8767" stroke="#6a4c38" stroke-width=".3"/>
<!-- left post bottom tip -->
<polygon points="327.1,366 332.4,366.2 337,360 337,368.2 331.7,378.7 328.4,376.1 327.1,370.2" fill="#9a7253" stroke="#5a4130" stroke-width=".35"/>
<!-- top beam -->
<polygon points="331.5,105.5 398.3,82.3 402,94.5 393.4,99 337.4,118.9" fill="#a57e5f" stroke="#5a4130" stroke-width=".4"/>
<polygon points="322.3,110.2 331.5,105.5 337.4,118.9 335,121 331.6,113" fill="#9c7657"/>
<line x1="331.5" y1="105.5" x2="337.4" y2="118.9" stroke="#5a4130" stroke-width=".5"/>
<line x1="327" y1="108" x2="331.8" y2="121" stroke="#6e513c" stroke-width=".4"/>
<line x1="398.3" y1="82.3" x2="402" y2="94.5" stroke="#5f4533" stroke-width=".5"/>
<!-- right post inner + front -->
<polygon points="393.4,99 394.2,98.6 394.2,340 389,340 389,103" fill="#a98160"/>
<polygon points="394.2,98.4 402,94.5 402,346 398.2,347 391,346 394.2,340" fill="#b08763"/>
<rect x="398.2" y="96.5" width="3.4" height="250" fill="#836148"/>
<rect x="393.9" y="100" width=".6" height="36" fill="#6a4d39"/>
<!-- band under opening 1 -->
<polygon points="340.2,123.2 391.4,104 395.4,109 341,127.4" fill="#96704f"/>
<!-- black bar -->
<polygon points="340.8,127 395.2,109 389.2,118.4 341.5,134.6" fill="#1a1511"/>
<!-- opening 1 white -->
<polygon points="338.2,119.6 393,99.9 391.4,104.2 340.2,123.4" fill="#fff"/>
<!-- opening 2 white -->
<polygon points="341.6,134.6 389.2,118.4 389.2,125.7 341.8,141.4" fill="#fff"/>
<!-- crossbar -->
<polygon points="341.8,141.4 391.4,125.2 391.4,131 341.8,147" fill="#a27b5c" stroke="#5e4433" stroke-width=".35"/>
<polygon points="341.6,146.8 391.4,130.8 391.4,136.3 341.6,151.6" fill="#7a5942"/>
<!-- black panel -->
<polygon points="341.6,151.4 388.8,137 388.8,336.6 341.6,352.2" fill="#111216"/>
<!-- bottom crossbar -->
<polygon points="389,334 398.4,334 398.4,349 391,346.4 389,344" fill="#ae8562"/>
<polygon points="341.6,352 391.4,336.2 391.4,340.6 341.6,356.4" fill="#7f5c44"/>
<polygon points="341.6,356.4 391.4,340.6 391.4,344.8 341.6,360.8" fill="#8c684c"/>
<polygon points="341.8,360.8 390.8,344.8 389.6,347 341.8,362.8" fill="#f3ece4"/>
<polygon points="341.8,362.8 389.6,347 391.2,346.2 397.8,348.4 340.6,367.4 337,368.4 337,364" fill="#a27a5a"/>
<!-- dark underside -->
<polygon points="340.6,367.3 397.8,348.3 403.2,346.2 398.2,356.1 331.7,378.9 337,368.3" fill="#2a1d16"/>
<!-- knob -->
<circle cx="392.3" cy="221.9" r="1.9" fill="#4e3424"/>
<circle cx="391.9" cy="221.5" r=".7" fill="#b89268"/>
</g>
</svg>
</body></html>
